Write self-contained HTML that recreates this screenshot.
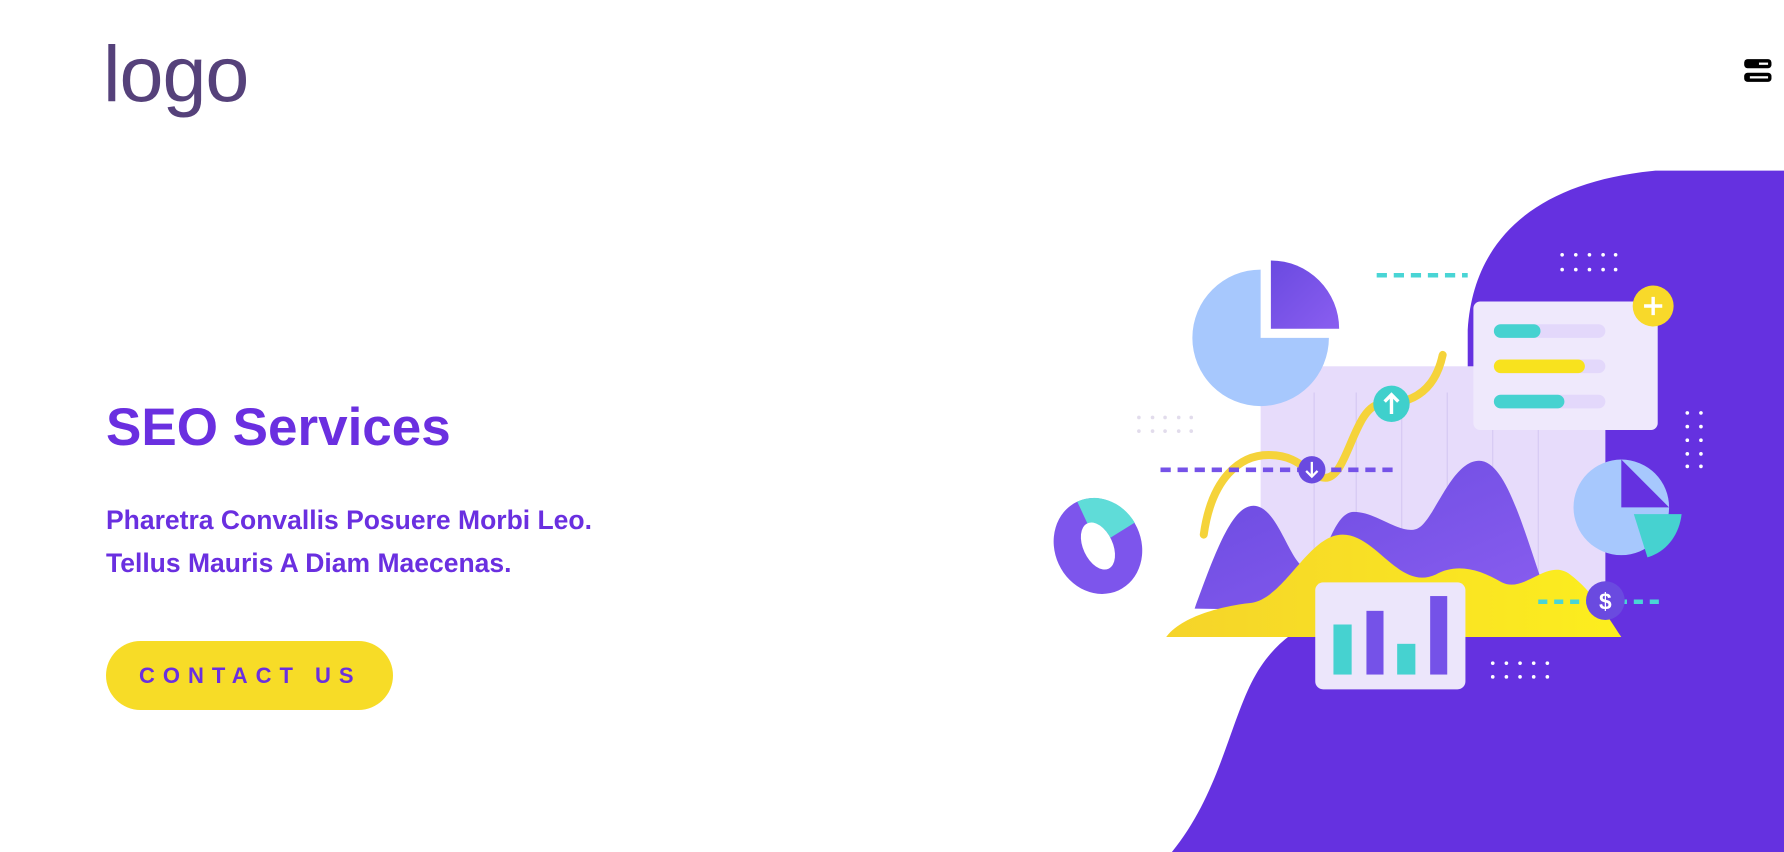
<!DOCTYPE html>
<html><head><meta charset="utf-8"><style>
html,body{margin:0;padding:0;width:1784px;height:852px;overflow:hidden;background:#fff;font-family:"Liberation Sans",Arial,sans-serif}
svg.bg{position:absolute;left:0;top:0}
.logo{position:absolute;left:103px;top:34px;font-size:79px;color:#55417a;line-height:1;letter-spacing:-1px}
h1{position:absolute;left:106px;top:401px;margin:0;font-size:53px;line-height:54px;color:#6a2fe0;font-weight:bold}
.sub{position:absolute;left:106px;top:499px;font-size:26.5px;line-height:43px;color:#6a2fe0;font-weight:bold}
.btn{position:absolute;left:106px;top:641px;width:287px;height:69px;border-radius:35px;background:#f7dc27;color:#6a2fe0;font-weight:bold;font-size:22px;letter-spacing:8px;line-height:69px;text-indent:33px}
</style></head><body>
<svg class="bg" width="1784" height="852" viewBox="0 0 1568 749" preserveAspectRatio="none">
<defs>
<linearGradient id="pm" x1="0" y1="0" x2="1" y2="1"><stop offset="0" stop-color="#6a4ae0"/><stop offset="1" stop-color="#8a5ef0"/></linearGradient>
<linearGradient id="yl" x1="0" y1="0" x2="1" y2="0"><stop offset="0" stop-color="#f5d42a"/><stop offset="1" stop-color="#fcee1e"/></linearGradient>
</defs>
<path d="M1568,150 L1568,749 L1030,749 C1070,700 1080,640 1100,600 C1120,560 1150,545 1200,525 L1290,440 L1290,290 C1295,210 1350,160 1455,150 Z" fill="#6531e0"/>
<rect x="1108" y="322" width="303" height="238" fill="#e7dcfb"/>
<g stroke="#d5c8f3" stroke-width="1"><line x1="1155" y1="345" x2="1155" y2="560"/><line x1="1192" y1="345" x2="1192" y2="560"/><line x1="1232" y1="345" x2="1232" y2="560"/><line x1="1272" y1="345" x2="1272" y2="560"/><line x1="1312" y1="345" x2="1312" y2="560"/><line x1="1352" y1="345" x2="1352" y2="560"/></g>
<path d="M1108,297 L1168,297 A60,60 0 1 1 1108,237 Z" fill="#a7c8fd"/>
<path d="M1117,289 L1117,229 A60,60 0 0 1 1177,289 Z" fill="url(#pm)"/>
<path d="M1050,535 C1070,480 1085,440 1105,445 C1125,450 1135,500 1150,500 C1165,500 1170,450 1190,450 C1210,450 1230,470 1245,465 C1260,460 1275,405 1300,405 C1325,405 1340,470 1365,540 Z" fill="url(#pm)"/>
<path d="M1025,560 C1040,540 1080,532 1100,530 C1130,525 1150,470 1180,470 C1210,470 1230,520 1262,505 C1280,495 1300,500 1320,512 C1340,522 1360,490 1380,505 C1400,520 1415,545 1425,560 Z" fill="url(#yl)"/>
<rect x="1156" y="512" width="132" height="94" rx="7" fill="#ece6fb"/>
<rect x="1172" y="549" width="16" height="44" fill="#46d2d0"/><rect x="1201" y="537" width="15" height="56" fill="#7552e8"/><rect x="1228" y="566" width="16" height="27" fill="#46d2d0"/><rect x="1257" y="524" width="15" height="69" fill="#7552e8"/>
<path d="M1058,470 C1065,420 1090,400 1115,400 C1145,400 1150,420 1165,420 C1185,420 1190,355 1215,355 C1245,355 1262,340 1268,312" stroke="#f5d33a" stroke-width="7" fill="none" stroke-linecap="round"/>
<line x1="1020" y1="413" x2="1226" y2="413" stroke="#7552e8" stroke-width="4" stroke-dasharray="9,6"/>
<circle cx="1153" cy="413" r="12" fill="#6a4ae0"/><path d="M1153,406 V419 M1148,414 L1153,419 L1158,414" stroke="#fff" stroke-width="2" fill="none"/>
<circle cx="1223" cy="355" r="16" fill="#3fd0cc"/><path d="M1223,364 V347 M1217,353 L1223,347 L1229,353" stroke="#fff" stroke-width="3" fill="none"/>
<line x1="1210" y1="242" x2="1290" y2="242" stroke="#49d5d5" stroke-width="4" stroke-dasharray="9,6"/>
<rect x="1295" y="265" width="162" height="113" rx="6" fill="#efe9fc"/>
<g stroke-linecap="round" stroke-width="12"><line x1="1319" y1="291" x2="1405" y2="291" stroke="#e3d8fb"/><line x1="1319" y1="322" x2="1405" y2="322" stroke="#e3d8fb"/><line x1="1319" y1="353" x2="1405" y2="353" stroke="#e3d8fb"/>
<line x1="1319" y1="291" x2="1348" y2="291" stroke="#46d2d0"/><line x1="1319" y1="322" x2="1387" y2="322" stroke="#f8e21e"/><line x1="1319" y1="353" x2="1369" y2="353" stroke="#46d2d0"/></g>
<circle cx="1453" cy="269" r="18" fill="#f8d92a"/><path d="M1453,261 V277 M1445,269 H1461" stroke="#fff" stroke-width="3"/>
<path d="M1425,446 L1467,446 A42,42 0 1 1 1425,404 Z" fill="#a7c8fd"/><path d="M1467,446 A42,42 0 0 0 1425,404 Z" fill="#a7c8fd"/>
<path d="M1436,452 L1478,452 C1476,470 1465,485 1448,490 Z" fill="#46d2d0"/>
<g transform="rotate(-25 965 480)"><ellipse cx="965" cy="480" rx="38" ry="43" fill="#7d55ec"/><path d="M965,437 A38,43 0 0 1 1003,475 L978,478 A14,22 0 0 0 965,458 Z" fill="#5fdcd8"/><ellipse cx="965" cy="480" rx="13" ry="22" fill="#fff"/></g>
<line x1="1352" y1="529" x2="1458" y2="529" stroke="#49d5d5" stroke-width="4" stroke-dasharray="8,6"/>
<circle cx="1411" cy="528" r="17" fill="#6a4ae0"/><text x="1411" y="536" font-size="20" font-weight="bold" fill="#fff" text-anchor="middle" font-family="Liberation Sans">$</text>
<g fill="#fff"><circle cx="1373" cy="224" r="1.6"/><circle cx="1385" cy="224" r="1.6"/><circle cx="1397" cy="224" r="1.6"/><circle cx="1409" cy="224" r="1.6"/><circle cx="1420" cy="224" r="1.6"/><circle cx="1373" cy="237" r="1.6"/><circle cx="1385" cy="237" r="1.6"/><circle cx="1397" cy="237" r="1.6"/><circle cx="1409" cy="237" r="1.6"/><circle cx="1420" cy="237" r="1.6"/>
<circle cx="1312" cy="583" r="1.6"/><circle cx="1324" cy="583" r="1.6"/><circle cx="1336" cy="583" r="1.6"/><circle cx="1348" cy="583" r="1.6"/><circle cx="1360" cy="583" r="1.6"/><circle cx="1312" cy="595" r="1.6"/><circle cx="1324" cy="595" r="1.6"/><circle cx="1336" cy="595" r="1.6"/><circle cx="1348" cy="595" r="1.6"/><circle cx="1360" cy="595" r="1.6"/>
<circle cx="1483" cy="363" r="1.6"/><circle cx="1495" cy="363" r="1.6"/><circle cx="1483" cy="375" r="1.6"/><circle cx="1495" cy="375" r="1.6"/><circle cx="1483" cy="387" r="1.6"/><circle cx="1495" cy="387" r="1.6"/><circle cx="1483" cy="399" r="1.6"/><circle cx="1495" cy="399" r="1.6"/><circle cx="1483" cy="410" r="1.6"/><circle cx="1495" cy="410" r="1.6"/></g>
<g fill="#e2dcec"><circle cx="1001" cy="367" r="1.6"/><circle cx="1013" cy="367" r="1.6"/><circle cx="1024" cy="367" r="1.6"/><circle cx="1036" cy="367" r="1.6"/><circle cx="1047" cy="367" r="1.6"/><circle cx="1001" cy="379" r="1.6"/><circle cx="1013" cy="379" r="1.6"/><circle cx="1024" cy="379" r="1.6"/><circle cx="1036" cy="379" r="1.6"/><circle cx="1047" cy="379" r="1.6"/></g>
<rect x="1533" y="52" width="24" height="8" rx="3" fill="#000"/><rect x="1533" y="64" width="24" height="8" rx="3" fill="#000"/>
<rect x="1546" y="55" width="8" height="2" fill="#fff"/><rect x="1538" y="67" width="16" height="2" fill="#fff"/>
</svg>
<div class="logo">logo</div>
<h1>SEO Services</h1>
<div class="sub">Pharetra Convallis Posuere Morbi Leo.<br>Tellus Mauris A Diam Maecenas.</div>
<div class="btn">CONTACT US</div>
</body></html>
